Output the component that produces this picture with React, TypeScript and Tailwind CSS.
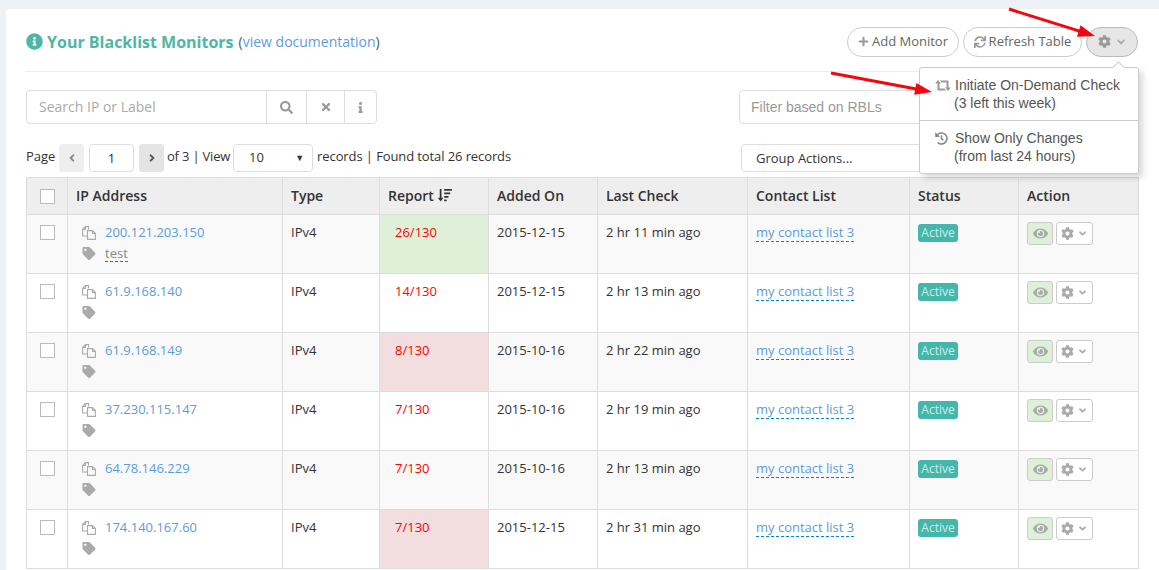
import React from "react";
import { FaInfoCircle, FaPlus, FaSync, FaCog, FaSearch, FaTimes, FaInfo, FaHistory, FaTag, FaEye, FaAngleLeft, FaAngleRight, FaAngleDown, FaSortAmountDown } from "react-icons/fa";

interface Monitor {
    ip: string;
    label?: string;
    report: string;
    tone?: string;
    added: string;
    last: string;
}

const monitors: Monitor[] = [
    { ip: "200.121.203.150", label: "test", report: "26/130", tone: "bg-[#dff0d8]", added: "2015-12-15", last: "2 hr 11 min ago" },
    { ip: "61.9.168.140", report: "14/130", added: "2015-12-15", last: "2 hr 13 min ago" },
    { ip: "61.9.168.149", report: "8/130", tone: "bg-[#f2dede]", added: "2015-10-16", last: "2 hr 22 min ago" },
    { ip: "37.230.115.147", report: "7/130", added: "2015-10-16", last: "2 hr 19 min ago" },
    { ip: "64.78.146.229", report: "7/130", added: "2015-10-16", last: "2 hr 13 min ago" },
    { ip: "174.140.167.60", report: "7/130", tone: "bg-[#f2dede]", added: "2015-12-15", last: "2 hr 31 min ago" },
];

const headers = ["IP Address", "Type", "Report", "Added On", "Last Check", "Contact List", "Status", "Action"];

function Arrow({ x1, y1, x2, y2, className }: { x1: number; y1: number; x2: number; y2: number; className: string }) {
    const a = Math.atan2(y2 - y1, x2 - x1);
    const back = (s: number) => `${x2 - 17 * Math.cos(a) - s * 6 * Math.sin(a)},${y2 - 17 * Math.sin(a) + s * 6 * Math.cos(a)}`;
    return (
        <svg className={className} width="1159" height="570">
            <line x1={x1} y1={y1} x2={x2 - 12 * Math.cos(a)} y2={y2 - 12 * Math.sin(a)} stroke="#f5050f" strokeWidth="3" />
            <polygon points={`${x2},${y2} ${back(1)} ${back(-1)}`} fill="#f5050f" />
        </svg>
    );
}

function Checkbox() {
    return <span className="block w-[15px] h-[15px] border border-[#bbb] bg-white mx-auto" />;
}

function CopyIcon() {
    return (
        <svg width="14" height="14" viewBox="0 0 14 14" fill="none" stroke="#aaa" strokeWidth="1.1" className="shrink-0 -mt-[1px]">
            <path d="M6.5 3.5V.6H3.4L.6 3.4V10H5" />
            <path d="M3.4.6V3.4H.6" />
            <path d="M10.5 4.6H5.5V13.4H13.4V7.4Z" />
            <path d="M10.5 4.6V7.4H13.4" />
        </svg>
    );
}

function RetweetIcon() {
    return (
        <svg width="16" height="11" viewBox="0 0 16 11" fill="#999" className="shrink-0 mr-[4px]">
            <path d="M3 0L6 3.5H4.5V8.5H9.5L11 10.5H3Q2.5 10.5 2.5 10V3.5H0Z" />
            <path d="M13 11L10 7.5H11.5V2.5H6.5L5 .5H13Q13.5 .5 13.5 1V7.5H16Z" />
        </svg>
    );
}

export default function App() {
    return (
        <div className="relative h-[570px] overflow-hidden bg-[#eef1f6] pt-[9px] pl-[6px] font-['Open_Sans',sans-serif] text-[13px] text-[#333]">
            <div className="bg-white rounded-tl-[4px] px-[20px] pt-[18px] h-[561px]">
                {/* Titulo e botoes */}
                <div className="flex items-center justify-between h-[45px] pb-[15px] border-b border-[#eee]">
                    <div className="flex items-center">
                        <FaInfoCircle className="text-[17px] text-[#4db6a4] mr-[4px]" />
                        <span className="font-bold text-[16px] text-[#4db6a4]">Your Blacklist Monitors</span>
                        <span className="ml-[5px] text-[14px] text-[#555]">(<span className="text-[#5d9cdb]">view documentation</span>)</span>
                    </div>
                    <div className="flex items-center gap-[4px] mr-[1px]">
                        <button className="h-[30px] w-[112px] rounded-full border border-[#ccc] flex items-center justify-center gap-[3px] text-[#666]"><FaPlus className="text-[11px] text-[#999]" />Add Monitor</button>
                        <button className="h-[30px] w-[119px] rounded-full border border-[#ccc] flex items-center justify-center gap-[3px] text-[#666]"><FaSync className="text-[12px] text-[#999]" />Refresh Table</button>
                        <button className="h-[30px] w-[52px] rounded-full border border-[#bbb] bg-[#e6e6e6] flex items-center justify-center gap-[4px] text-[#999]"><FaCog className="text-[13px]" /><FaAngleDown className="text-[12px] text-[#aaa]" /></button>
                    </div>
                </div>

                {/* Busca e filtro */}
                <div className="flex justify-between mt-[18px] h-[34px]">
                    <div className="flex w-[351px] border border-[#ddd] rounded-[4px] text-[#999]">
                        <div className="w-[239px] px-[12px] pb-[2px] flex items-center text-[14px] text-[#aaa]">Search IP or Label</div>
                        <div className="w-[40px] border-l border-[#ddd] flex items-center justify-center"><FaSearch className="text-[13px]" /></div>
                        <div className="w-[38px] border-l border-[#ddd] flex items-center justify-center"><FaTimes className="text-[12px]" /></div>
                        <div className="flex-1 border-l border-[#ddd] flex items-center justify-center"><FaInfo className="text-[11px]" /></div>
                    </div>
                    <div className="w-[400px] border border-[#ddd] rounded-[4px] px-[11px] flex items-center text-[14px] text-[#999] font-['Liberation_Sans',sans-serif]">Filter based on RBLs</div>
                </div>

                {/* Paginacao */}
                <div className="flex justify-between mt-[20px] h-[28px] items-center">
                    <div className="flex items-center">
                        <span className="w-[29px] pb-[2px]">Page</span>
                        <span className="ml-[4px] w-[25px] h-[28px] rounded-[3px] bg-[#eee] flex items-center justify-center text-[#888]"><FaAngleLeft className="text-[12px]" /></span>
                        <span className="ml-[5px] w-[45px] h-[28px] rounded-[4px] border border-[#ddd] flex items-center justify-center pt-[2px]">1</span>
                        <span className="ml-[5px] w-[25px] h-[28px] rounded-[3px] bg-[#e4e4e4] flex items-center justify-center text-[#555]"><FaAngleRight className="text-[12px]" /></span>
                        <span className="ml-[3px] pb-[2px] tracking-[-0.2px]">of 3 | View</span>
                        <span className="ml-[3px] w-[80px] h-[28px] rounded-[4px] border border-[#ddd] flex items-center justify-between pl-[15px] pr-[8px]">10<span className="text-[9px]">▼</span></span>
                        <span className="ml-[4px] pb-[2px] tracking-[-0.1px]">records | Found total 26 records</span>
                    </div>
                    <div className="w-[398px] h-[28px] border border-[#ddd] rounded-[4px] flex items-center pl-[14px] pt-[2px]">Group Actions...</div>
                </div>

                {/* Tabela */}
                <table className="mt-[5px] w-[1112px] table-fixed border-collapse">
                    <colgroup>
                        <col className="w-[41px]" />
                        <col className="w-[215px]" />
                        <col className="w-[97px]" />
                        <col className="w-[109px]" />
                        <col className="w-[109px]" />
                        <col className="w-[150px]" />
                        <col className="w-[162px]" />
                        <col className="w-[109px]" />
                        <col className="w-[120px]" />
                    </colgroup>
                    <thead>
                        <tr className="h-[37px] bg-[#eee]">
                            <th className="border border-[#ddd]"><Checkbox /></th>
                            {headers.map((h) => (
                                <th key={h} className="border border-[#ddd] px-[8px] pb-[2px] text-left text-[14px] font-semibold whitespace-nowrap">
                                    <span className="inline-flex items-center gap-[4px]">{h}{h === "Report" && <FaSortAmountDown className="text-[14px]" />}</span>
                                </th>
                            ))}
                        </tr>
                    </thead>
                    <tbody>
                        {monitors.map((m, i) => (
                            <tr key={m.ip} className={i % 2 === 0 ? "h-[59px] bg-[#f9f9f9]" : "h-[59px] bg-white"}>
                                <td className="border border-[#ddd] align-top pt-[10px]"><Checkbox /></td>
                                <td className="border border-[#ddd] align-top pl-[14px] pt-[9px]">
                                    <div className="flex items-center h-[18px]">
                                        <CopyIcon />
                                        <span className="ml-[9px] text-[#5d9cdb]">{m.ip}</span>
                                    </div>
                                    <div className="flex items-center h-[18px] mt-[3px]">
                                        <FaTag className="text-[13px] text-[#aaa] w-[14px] shrink-0 -mt-[1px]" />
                                        {m.label && <span className="ml-[9px] text-[#888] border-b border-dashed border-[#666] leading-[15px]">{m.label}</span>}
                                    </div>
                                </td>
                                <td className="border border-[#ddd] align-top px-[8px] pt-[8px]">IPv4</td>
                                <td className={`border border-[#ddd] align-top pl-[15px] pt-[8px] text-[#f00] ${m.tone ?? ""}`}>{m.report}</td>
                                <td className="border border-[#ddd] align-top px-[8px] pt-[8px]">{m.added}</td>
                                <td className="border border-[#ddd] align-top px-[8px] pt-[8px]">{m.last}</td>
                                <td className="border border-[#ddd] align-top px-[8px] pt-[8px]"><span className="text-[#5d9cdb] border-b border-dashed border-[#08c]">my contact list 3</span></td>
                                <td className="border border-[#ddd] align-top px-[8px] pt-[9px]">
                                    <span className="block w-[40px] h-[18px] rounded-[3px] bg-[#45b6ac] text-[#c9efe9] text-[12px] leading-[17px] text-center">Active</span>
                                </td>
                                <td className="border border-[#ddd] align-top px-[8px] pt-[7px]">
                                    <div className="flex gap-[3px]">
                                        <span className="w-[26px] h-[23px] rounded-[3px] border border-[#ccc] bg-[#dff0d8] flex items-center justify-center text-[#aaa]"><FaEye className="text-[15px]" /></span>
                                        <span className="w-[37px] h-[23px] rounded-[3px] border border-[#ccc] bg-white flex items-center justify-center gap-[3px] text-[#aaa]"><FaCog className="text-[13px]" /><FaAngleDown className="text-[11px]" /></span>
                                    </div>
                                </td>
                            </tr>
                        ))}
                    </tbody>
                </table>
            </div>

            {/* Menu aberto */}
            <div className="absolute left-[919px] top-[67px] w-[220px] h-[107px] bg-white border border-[#ccc] rounded-[3px] shadow-[4px_4px_6px_rgba(0,0,0,0.15)] font-['Liberation_Sans',sans-serif] text-[14px] leading-[18px] text-[#555]">
                <span className="absolute -top-[5px] right-[15px] w-[9px] h-[9px] rotate-45 bg-white border-l border-t border-[#ccc]" />
                <div className="h-[53px] border-b border-[#ccc] pt-[8px] pl-[15px]">
                    <div className="flex items-center"><RetweetIcon />Initiate On-Demand Check</div>
                    <div className="pl-[19px]">(3 left this week)</div>
                </div>
                <div className="pt-[8px] pl-[15px]">
                    <div className="flex items-center"><FaHistory className="text-[13px] text-[#888] mr-[7px]" />Show Only Changes</div>
                    <div className="pl-[19px]">(from last 24 hours)</div>
                </div>
            </div>

            {/* Setas vermelhas */}
            <Arrow className="absolute left-0 top-0 pointer-events-none" x1={1009} y1={9} x2={1095} y2={36} />
            <Arrow className="absolute left-0 top-0 pointer-events-none" x1={831} y1={73} x2={932} y2={92} />
        </div>
    );
}
